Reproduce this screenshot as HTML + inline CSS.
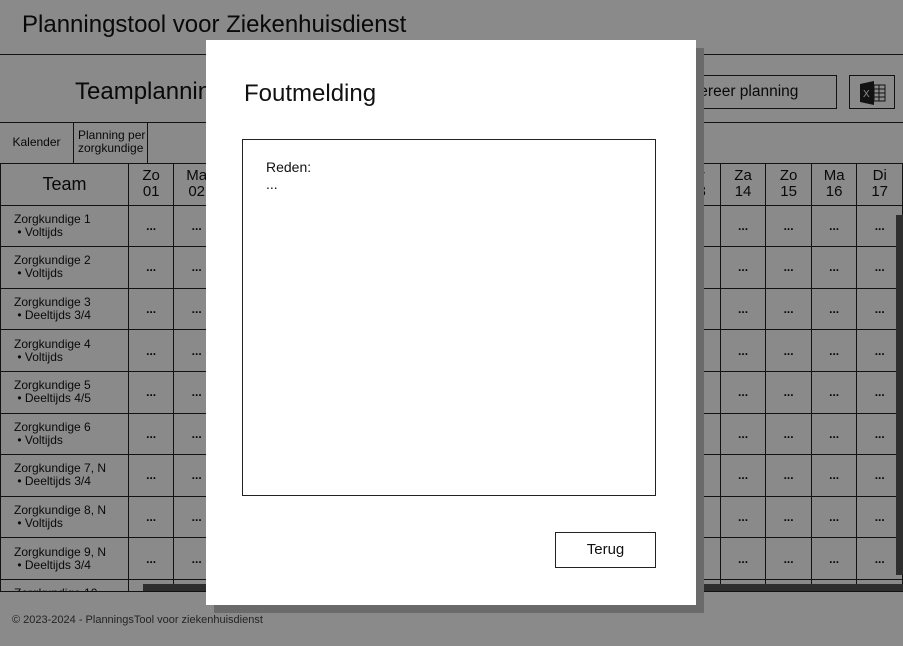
<!DOCTYPE html>
<html><head><meta charset="utf-8"><style>
*{box-sizing:border-box;margin:0;padding:0}
body{width:903px;height:646px;overflow:hidden;background:#fff;font-family:"Liberation Sans",sans-serif;color:#111;position:relative}
.abs{position:absolute}
.wrap{position:absolute;left:0;top:163px;width:903px;height:428px;overflow:hidden}
table{border-collapse:collapse;table-layout:fixed}
td,th{border:1px solid #222;text-align:center;font-weight:normal;font-size:14px;line-height:16px;height:41.6px}
th{font-size:15px}
td{font-weight:bold;font-size:12px}
td.n{text-align:left;font-size:12px;font-weight:normal;line-height:13px;padding-left:13px}
.ov{position:absolute;left:0;top:0;width:903px;height:646px;background:rgba(0,0,0,0.46)}
</style></head><body>
<div class="abs" style="left:22px;top:11px;font-size:24px">Planningstool voor Ziekenhuisdienst</div>
<div class="abs" style="left:0;top:54px;width:903px;border-top:1px solid #222"></div>
<div class="abs" style="left:75px;top:78px;font-size:24px">Teamplanning</div>
<div class="abs" style="left:640px;top:75px;width:197px;height:34px;border:1px solid #222;font-size:15.5px;line-height:32px;padding-left:29px">Genereer planning</div>
<div class="abs" style="left:849px;top:75px;width:46px;height:34px;border:1px solid #222">
<svg width="46" height="34" viewBox="0 0 46 34"><path d="M10 8 L24 5 L24 29 L10 26 Z" fill="#222"/><text x="13" y="21" font-size="10" fill="#fff" font-family="Liberation Sans">X</text><rect x="24" y="9" width="11" height="16" fill="none" stroke="#222"/><path d="M24 13H35M24 17H35M24 21H35M29 9V25" stroke="#222"/></svg></div>
<div class="abs" style="left:0;top:122px;width:903px;border-top:1px solid #222"></div>
<div class="abs" style="left:0;top:122px;width:74px;height:41px;border-right:1px solid #222;font-size:12px;line-height:41px;text-align:center">Kalender</div>
<div class="abs" style="left:74px;top:122px;width:74px;height:41px;border-right:1px solid #222;font-size:12px;line-height:13px;padding:7px 0 0 4px">Planning per zorgkundige</div>
<div class="wrap"><table>
<colgroup><col style="width:128px"><col span="17" style="width:45.6px"></colgroup>
<tr><th style="font-size:18px">Team</th>
<th>Zo<br>01</th><th>Ma<br>02</th><th>Di<br>03</th><th>Wo<br>04</th><th>Do<br>05</th><th>Vr<br>06</th><th>Za<br>07</th><th>Zo<br>08</th><th>Ma<br>09</th><th>Di<br>10</th><th>Wo<br>11</th><th>Do<br>12</th><th>Vr<br>13</th><th>Za<br>14</th><th>Zo<br>15</th><th>Ma<br>16</th><th>Di<br>17</th></tr>
<tr><td class="n">Zorgkundige 1<br>&nbsp;• Voltijds</td><td>...</td><td>...</td><td>...</td><td>...</td><td>...</td><td>...</td><td>...</td><td>...</td><td>...</td><td>...</td><td>...</td><td>...</td><td>...</td><td>...</td><td>...</td><td>...</td><td>...</td></tr>
<tr><td class="n">Zorgkundige 2<br>&nbsp;• Voltijds</td><td>...</td><td>...</td><td>...</td><td>...</td><td>...</td><td>...</td><td>...</td><td>...</td><td>...</td><td>...</td><td>...</td><td>...</td><td>...</td><td>...</td><td>...</td><td>...</td><td>...</td></tr>
<tr><td class="n">Zorgkundige 3<br>&nbsp;• Deeltijds 3/4</td><td>...</td><td>...</td><td>...</td><td>...</td><td>...</td><td>...</td><td>...</td><td>...</td><td>...</td><td>...</td><td>...</td><td>...</td><td>...</td><td>...</td><td>...</td><td>...</td><td>...</td></tr>
<tr><td class="n">Zorgkundige 4<br>&nbsp;• Voltijds</td><td>...</td><td>...</td><td>...</td><td>...</td><td>...</td><td>...</td><td>...</td><td>...</td><td>...</td><td>...</td><td>...</td><td>...</td><td>...</td><td>...</td><td>...</td><td>...</td><td>...</td></tr>
<tr><td class="n">Zorgkundige 5<br>&nbsp;• Deeltijds 4/5</td><td>...</td><td>...</td><td>...</td><td>...</td><td>...</td><td>...</td><td>...</td><td>...</td><td>...</td><td>...</td><td>...</td><td>...</td><td>...</td><td>...</td><td>...</td><td>...</td><td>...</td></tr>
<tr><td class="n">Zorgkundige 6<br>&nbsp;• Voltijds</td><td>...</td><td>...</td><td>...</td><td>...</td><td>...</td><td>...</td><td>...</td><td>...</td><td>...</td><td>...</td><td>...</td><td>...</td><td>...</td><td>...</td><td>...</td><td>...</td><td>...</td></tr>
<tr><td class="n">Zorgkundige 7, N<br>&nbsp;• Deeltijds 3/4</td><td>...</td><td>...</td><td>...</td><td>...</td><td>...</td><td>...</td><td>...</td><td>...</td><td>...</td><td>...</td><td>...</td><td>...</td><td>...</td><td>...</td><td>...</td><td>...</td><td>...</td></tr>
<tr><td class="n">Zorgkundige 8, N<br>&nbsp;• Voltijds</td><td>...</td><td>...</td><td>...</td><td>...</td><td>...</td><td>...</td><td>...</td><td>...</td><td>...</td><td>...</td><td>...</td><td>...</td><td>...</td><td>...</td><td>...</td><td>...</td><td>...</td></tr>
<tr><td class="n">Zorgkundige 9, N<br>&nbsp;• Deeltijds 3/4</td><td>...</td><td>...</td><td>...</td><td>...</td><td>...</td><td>...</td><td>...</td><td>...</td><td>...</td><td>...</td><td>...</td><td>...</td><td>...</td><td>...</td><td>...</td><td>...</td><td>...</td></tr>
<tr><td class="n">Zorgkundige 10<br>&nbsp;• Voltijds</td><td>...</td><td>...</td><td>...</td><td>...</td><td>...</td><td>...</td><td>...</td><td>...</td><td>...</td><td>...</td><td>...</td><td>...</td><td>...</td><td>...</td><td>...</td><td>...</td><td>...</td></tr>
</table></div>
<div class="abs" style="left:0;top:591px;width:903px;border-top:1px solid #222"></div>
<div class="abs" style="left:143px;top:584px;width:760px;height:7px;background:#555"></div>
<div class="abs" style="left:896px;top:215px;width:7px;height:360px;background:#555"></div>
<div class="abs" style="left:12px;top:614px;font-size:11px;color:#444">© 2023-2024 - PlanningsTool voor ziekenhuisdienst</div>
<div class="ov"></div>
<div class="abs" style="left:214px;top:48px;width:490px;height:565px;background:#6a6a6a"></div>
<div class="abs" style="left:206px;top:40px;width:490px;height:565px;background:#fff">
<div class="abs" style="left:38px;top:40px;font-size:24px">Foutmelding</div>
<div class="abs" style="left:36px;top:99px;width:414px;height:357px;border:1px solid #222;padding:19px 23px;font-size:14px;line-height:17px">Reden:<br>...</div>
<div class="abs" style="left:349px;top:492px;width:101px;height:36px;border:1px solid #222;font-size:15px;line-height:34px;text-align:center">Terug</div>
</div>
</body></html>
